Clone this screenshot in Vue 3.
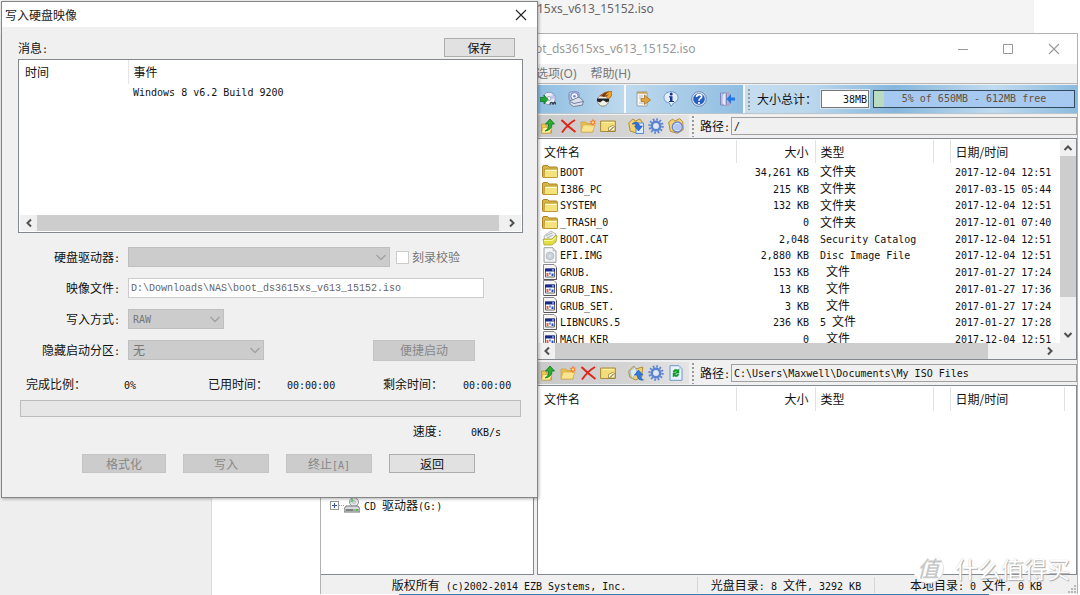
<script setup>
import { h } from 'vue'

/* Latin runs use a half-width monospace face next to full-width Chinese. */
const Mix = ({ t }) =>
  h('span', { class: 'mix' }, t.split(/([\u2e80-\uffef]+)/).filter(Boolean).map(part =>
    /[\u2e80-\uffef]/.test(part) ? h('span', part) : h('span', { class: 'mono' }, part)))
Mix.props = ['t']

const folder = '<path d="M.5 4q0-1.500 1.500-1.500h3.500l1.500 1.500h7q1.500 0 1.500 1.500V13.500q0 1-1 1H1.500q-1 0-1-1z" fill="#d9b64a" stroke="#a98222"/><path d="M2.500 6H15.500v7.500q0 1-1 1H3q-.8 0-.8-1z" fill="#f4e27c" stroke="#b8922d" stroke-width=".8"/><path d="M3.500 7.500h11" stroke="#fffbd0"/>'
const smallFolder = '<path d="M1 4h5l1 1.500h6V14H1z" fill="#e9c04d" stroke="#c99a2c" stroke-width=".6"/><path d="M3 7h12L12.500 14H1z" fill="#fbe48f" stroke="#cfa33b" stroke-width=".6"/>'
const art = {
  folder,
  catalog: '<path d="M2 6l7-5 5 3-3 6-8 1z" fill="#eef0ee" stroke="#9ba09a" stroke-width=".7"/><path d="M4 6l6-3M5 8l6-3" stroke="#a9b0b0" fill="none"/><path d="M1 9h9l4-4 1 1-1 6-4 3H2z" fill="#e2df45" stroke="#9b982b" stroke-width=".7"/><path d="M2 10.500h8l4-3" stroke="#fff9a0" fill="none"/>',
  image: '<path d="M2 .7h9L14 4v11.300H2z" fill="#f6f7f8" stroke="#9a9ea2"/><path d="M11 1v3h3" fill="#ddd" stroke="#aaa" stroke-width=".6"/><circle cx="8" cy="9" r="4" fill="#c7d2da" stroke="#aab3ba" stroke-width=".6"/><circle cx="8" cy="9" r="1" fill="#e5ebef"/>',
  file: '<path d="M1.500 .5h10.500l2.500 2.500V15.500h-13z" fill="#f4f4f4" stroke="#8a8a8a"/><path d="M14.500 4v11.500H2" fill="none" stroke="#555"/><path d="M3.500 5h9v8h-9z" fill="#fff" stroke="#666"/><path d="M3 4.500h10v3H3z" fill="#182a8b"/><path d="M10 5.500h2v1h-2z" fill="#dfe5ff"/><path d="M4.500 9h2v3h-2z" fill="#e0604a"/><path d="M7 8.500h2v2H7z" fill="#5c90e8"/><path d="M9.500 9.500h2v2.500h-2z" fill="#2a4fbf"/>',
  mount: '<circle cx="9" cy="7.500" r="6.300" fill="#e8edf7" stroke="#8b98b8"/><path d="M9 7.500L13 3a6 6 0 0 1 1.700 5z" fill="#c9c3f1"/><circle cx="9" cy="7.500" r="2" fill="#fff" stroke="#9aa6bd"/><path d="M4 4v2.500H0v4h4V13l4-4.500z" fill="#22a339" stroke="#0c6f20" stroke-width=".7"/><path d="M10 13.500q0-2 1.500-2t1 2M13.500 13.500q0-2 1-2t1.500 2" fill="none" stroke="#343a46" stroke-width="1.300"/>',
  burner: '<rect x="1" y=".8" width="10" height="9" rx="2" fill="#b9c5f1" stroke="#7b88b8"/><circle cx="6.500" cy="5.300" r="3.700" fill="#f2f4ff" stroke="#7182bd"/><circle cx="6.500" cy="5.300" r="1.300" fill="#718fd2"/><path d="M2 10l9-4 4.500 4-1 4-9 1.500L2 13z" fill="#dce2ed" stroke="#606c85" stroke-width=".8"/><path d="M3 11l3 1.500 9-2" fill="none" stroke="#7380a8"/>',
  burn: '<circle cx="7" cy="9.500" r="5.700" fill="#f0f1e6" stroke="#8a8b83"/><path d="M1 7.500h12v2.500l-2.500 1.500L8 9.500H6.500L4 11.500 1 10z" fill="#202024"/><path d="M4 5Q7 1 15.500 0q-1 2 .5 3-1 4-4 5L10 5z" fill="#f3a325" stroke="#98511c" stroke-width=".7"/><path d="M5 5q3-4 8-4-3 1-4 4l4-2q-2 3-5 3z" fill="#74391a"/>',
  exportDoc: '<path d="M2 1h10v14H2z" fill="#f8f6ed" stroke="#8995a5" stroke-width=".8"/><path d="M2 .7h10v2H2z" fill="#c5a25d"/><path d="M4 5h4M4 7h3M4 12h5" stroke="#b1bed0"/><path d="M6 7.500h3.500V4l6 5-6 4.500V10.500H6z" fill="#e4a23a" stroke="#a26a1c" stroke-width=".7"/>',
  info: '<path d="M8 .7c4 0 7 2.500 7 6 0 3-2 4.500-4.500 5.300L8 15.500 6.500 12C3 11.500 1 9.500 1 6.700c0-3.500 3-6 7-6z" fill="#e4eefb" stroke="#7497c5"/><circle cx="8.200" cy="3" r="1.500" fill="#173a91"/><path d="M6 5.300h3.500V10H11v1H6v-1h1V6.500H6z" fill="#173a91"/>',
  help: '<circle cx="8" cy="8" r="7.300" fill="#dfe9f8" stroke="#7388b3"/><circle cx="8" cy="8" r="5.800" fill="#275fc3"/><path d="M5.500 6q.3-2.400 2.700-2.400 2.500 0 2.500 2 0 1.200-1.500 2Q8 8.400 8 9.700" fill="none" stroke="#fff" stroke-width="1.700"/><circle cx="8" cy="12" r="1.100" fill="#fff"/>',
  exit: '<path d="M1.500 2h6v12h-6z" fill="#cbd0ef" stroke="#7986bf"/><path d="M3 4l4-3v14l-4-2z" fill="#e4e6f8" stroke="#8993bd" stroke-width=".7"/><path d="M8 2h2v3M10 11v3H8" fill="none" stroke="#d88d91"/><path d="M16 6.500h-4V3L7.500 8l4.500 5V9.500h4z" fill="#2676e8"/>',
  up: '<path d="M1.500 6h4l1 2h5v7h-10z" fill="#efc653" stroke="#b88a24" stroke-width=".7"/><path d="M3 9.500h9l-2 5.500H1.500z" fill="#fff09b" stroke="#c79d37" stroke-width=".6"/><path d="M5 13q4-2 3.500-7H5.500l4.500-5 4.500 5h-2.500q0 6-7 7z" fill="#2cad35" stroke="#10761b" stroke-width=".8"/>',
  del: '<path d="M1.500 2q6 6 14 12M15 2Q8 6 2 14.500" fill="none" stroke="#df2418" stroke-width="1.900"/>',
  newFolder: smallFolder + '<path d="M13 .5l1 2.200 2-.2-1.200 2L16 6l-2.200.2L13 8.500l-1-2-2 .2L11 4.500 9.700 3l2.300-.2z" fill="#f37936"/><circle cx="13" cy="4.500" r="1.200" fill="#ffda73"/>',
  rename: '<path d="M.6 3h14.800v10.500H.6z" fill="#f4dc79" stroke="#a68c3c"/><path d="M8.500 13V9.500l4-2 2.500 1V13z" fill="#fff6c5" stroke="#927a37" stroke-width=".7"/><path d="M10 12.500l3.500-3.500" stroke="#5c4d26"/><path d="M2 4.500h12" stroke="#fff2a6"/>',
  extract: '<path d="M.7 5l4-4 3 2 4-2 2.500 3v8l-6 3-6-2z" fill="#f3d36d" stroke="#b18a37"/><path d="M8 5h7.500v10.500H8z" fill="#dcebfd" stroke="#5490d4"/><path d="M4 6q5-5 8 2h2.500l-4 5-4-5h2q-1-3-4.500-2z" fill="#2d6fdb" stroke="#1e4da5" stroke-width=".5"/>',
  add: '<path d="M.7 6l5-5 2 3 7-2-1 10-6 3-6-3z" fill="#f3d36d" stroke="#b18a37"/><path d="M2 6l5-4 2 5-5 7z" fill="#d9e9fc" stroke="#79a2ce" stroke-width=".6"/><path d="M6.500 10l4-5 4.500 5h-2.500q0 4 3 5-6 1-6.500-5z" fill="#2d7ae0" stroke="#2055a4" stroke-width=".6"/>',
  gear: '<g fill="none" stroke="#5a84d2"><circle cx="8" cy="8" r="6.600" stroke-width="2.200" stroke-dasharray="1.700 1.756"/><circle cx="8" cy="8" r="4.200" stroke-width="2.600"/></g><circle cx="8" cy="8" r="2.600" fill="#dfe6f4"/>',
  disc: '<path d="M.7 4l4-3 2 2 5-2.300 3 3 .6 8-6 3.600-7-2z" fill="#f3d36d" stroke="#b98d32"/><circle cx="9.300" cy="9" r="5" fill="#dbe4fb" stroke="#6785d5" stroke-width="1.300"/><path d="M6.500 7h6M5.500 9h8M6.500 11h6" stroke="#8fa7e5"/>',
  refresh: '<path d="M2 .7h9l3 3v11.600H2z" fill="#e9f2ff" stroke="#7196ca"/><path d="M11 1v3h3" fill="#b9d3f2"/><path d="M5 7q1-4 5-2l1-1v4H7.500L9 6.500Q7 5.500 6.500 7.500zM11 9q-1 4-5 2l-1 1V8h3.500L7 9.700q2 1 2.500-.9z" fill="#159b2b" stroke="#159b2b" stroke-width=".5"/>',
  drive: '<circle cx="10" cy="5" r="4.500" fill="#e3e7ea" stroke="#929aa0"/><circle cx="10" cy="5" r="1.300" fill="#fff" stroke="#888" stroke-width=".6"/><path d="M8 1l2 3-4 2z" fill="#72cf75"/><path d="M2 9h12l2 3v3H0v-3z" fill="#d8dadd" stroke="#777"/><path d="M1 12h14v3H1z" fill="#a7abae"/><path d="M2 13h7" stroke="#555"/><path d="M12 12h2v2h-2z" fill="#38d528"/>',
  chevron: '<path d="M3.500 6L8 10.500 12.500 6" fill="none" stroke="#a0a0a0" stroke-width="1.300"/>',
  left: '<path d="M10 4.500L6.500 8l3.500 3.500" fill="none" stroke="#505050" stroke-width="2"/>',
  right: '<path d="M6 4.500L9.500 8 6 11.500" fill="none" stroke="#505050" stroke-width="2"/>',
  top: '<path d="M4.500 10L8 6.500l3.500 3.500" fill="none" stroke="#505050" stroke-width="2"/>',
  down: '<path d="M4.500 6L8 9.500 11.500 6" fill="none" stroke="#505050" stroke-width="2"/>',
  close: '<path d="M3 3l10 10M13 3L3 13" fill="none" stroke="currentColor" stroke-width="1.100"/>',
  min: '<path d="M3 8.500h10" fill="none" stroke="currentColor"/>',
  max: '<path d="M3.500 3.500h9v9h-9z" fill="none" stroke="currentColor"/>',
}
const Icon = ({ name }) => h('svg', { viewBox: '0 0 16 16', class: 'icon', 'aria-hidden': 'true', innerHTML: art[name] })
Icon.props = ['name']

const mainTools = [
  [['mount', '加载'], ['burner', '光驱'], ['burn', '刻录']],
  [['exportDoc', '导出'], ['info', '信息'], ['help', '帮助'], ['exit', '退出']],
]
const isoTools = [
  [['up', '上级'], ['del', '删除'], ['newFolder', '新建'], ['rename', '重命名']],
  [['extract', '提取'], ['gear', '选项'], ['disc', '光盘']],
]
const localTools = [
  [['up', '上级'], ['newFolder', '新建'], ['del', '删除'], ['rename', '重命名']],
  [['add', '添加'], ['gear', '选项'], ['refresh', '刷新']],
]
const files = [
  ['folder', 'BOOT', '34,261 KB', '文件夹', '2017-12-04 12:51'],
  ['folder', 'I386_PC', '215 KB', '文件夹', '2017-03-15 05:44'],
  ['folder', 'SYSTEM', '132 KB', '文件夹', '2017-12-04 12:51'],
  ['folder', '_TRASH_0', '0', '文件夹', '2017-12-01 07:40'],
  ['catalog', 'BOOT.CAT', '2,048', 'Security Catalog', '2017-12-04 12:51'],
  ['image', 'EFI.IMG', '2,880 KB', 'Disc Image File', '2017-12-04 12:51'],
  ['file', 'GRUB.', '153 KB', ' 文件', '2017-01-27 17:24'],
  ['file', 'GRUB_INS.', '13 KB', ' 文件', '2017-01-27 17:36'],
  ['file', 'GRUB_SET.', '3 KB', ' 文件', '2017-01-27 17:24'],
  ['file', 'LIBNCURS.5', '236 KB', '5 文件', '2017-01-27 17:28'],
  ['file', 'MACH_KER', '0', ' 文件', '2017-12-04 12:51'],
]
</script>

<template>
  <main class="desktop">
    <div class="back-top">15xs_v613_15152.iso</div>
    <div class="back-left"></div>
    <div class="taskline"></div>

    <section class="iso">
      <header class="iso-title">
        <span class="iso-name">ot_ds3615xs_v613_15152.iso</span>
        <button aria-label="最小化"><Icon name="min" /></button>
        <button aria-label="最大化"><Icon name="max" /></button>
        <button aria-label="关闭"><Icon name="close" /></button>
      </header>
      <nav class="menu"><button>选项(O)</button><button>帮助(H)</button></nav>
      <div class="maintools">
        <div v-for="(group, g) in mainTools" :key="g" class="maingroup" :class="'g' + g">
          <button v-for="b in group" :key="b[0]" :aria-label="b[1]"><Icon :name="b[0]" /></button>
        </div>
        <div class="capacity">
          <i class="grip"></i>
          <label for="total">大小总计：</label>
          <input id="total" class="total" value="38MB" readonly>
          <div class="meter"><span class="used" :style="{ width: '5%' }"></span><span class="meter-text">5% of 650MB - 612MB free</span></div>
        </div>
      </div>

      <div class="panes">
        <div class="tree">
          <div class="node"><span class="plus"></span><i class="dots"></i><Icon name="drive" /><Mix t="CD 驱动器(G:)" /></div>
        </div>
        <div class="right">
          <div class="pathbar">
            <div class="tools">
              <div v-for="(group, g) in isoTools" :key="g" class="toolgroup">
                <button v-for="b in group" :key="b[0]" :aria-label="b[1]"><Icon :name="b[0]" /></button>
              </div>
            </div>
            <i class="grip"></i>
            <label for="isopath"><Mix t="路径:" /></label>
            <input id="isopath" value="/" readonly>
          </div>
          <div class="list upper">
            <div class="view">
              <div class="clip">
                <table class="files">
                  <colgroup><col class="c-name"><col class="c-size"><col class="c-type"><col class="c-gap"><col></colgroup>
                  <thead><tr><th>文件名</th><th class="num">大小</th><th>类型</th><th></th><th class="end">日期/时间</th></tr></thead>
                  <tbody>
                    <tr v-for="f in files" :key="f[1]">
                      <td><span class="fname"><Icon :name="f[0]" /><Mix :t="f[1]" /></span></td>
                      <td class="num"><Mix :t="f[2]" /></td>
                      <td><Mix :t="f[3]" /></td>
                      <td></td>
                      <td><Mix :t="f[4]" /></td>
                    </tr>
                  </tbody>
                </table>
              </div>
              <div class="vbar"><Icon name="top" /><span class="vthumb"></span><Icon name="down" /></div>
            </div>
            <div class="hbar"><Icon name="left" /><span class="htrack"><span class="hthumb"></span></span><Icon name="right" /></div>
          </div>
          <div class="pathbar second">
            <div class="tools">
              <div v-for="(group, g) in localTools" :key="g" class="toolgroup">
                <button v-for="b in group" :key="b[0]" :aria-label="b[1]"><Icon :name="b[0]" /></button>
              </div>
            </div>
            <i class="grip"></i>
            <label for="localpath"><Mix t="路径:" /></label>
            <input id="localpath" value="C:\Users\Maxwell\Documents\My ISO Files" readonly>
          </div>
          <div class="list lower">
            <table class="files short">
              <colgroup><col class="c-name"><col class="c-size"><col class="c-type"><col class="c-gap"><col></colgroup>
              <thead><tr><th>文件名</th><th class="num">大小</th><th>类型</th><th></th><th>日期/时间</th></tr></thead>
            </table>
          </div>
        </div>
      </div>
      <footer class="status">
        <Mix t="版权所有 (c)2002-2014 EZB Systems, Inc." />
        <Mix t="光盘目录: 8 文件, 3292 KB" />
        <Mix t="本地目录: 0 文件, 0 KB" />
        <svg class="sizer" viewBox="0 0 9 9" aria-hidden="true"><path d="M7 1h2v2H7zM4 4h2v2H4zM7 4h2v2H7zM1 7h2v2H1zM4 7h2v2H4zM7 7h2v2H7z" fill="#b8b8b8" /></svg>
      </footer>
    </section>

    <section class="dialog" role="dialog" aria-labelledby="dlg-title">
      <header class="dlg-head"><h1 id="dlg-title">写入硬盘映像</h1><button aria-label="关闭"><Icon name="close" /></button></header>
      <div class="dlg-body">
        <div class="msg-head"><Mix t="消息:" /><button class="btn save">保存</button></div>
        <div class="log">
          <table>
            <colgroup><col class="c-time"><col></colgroup>
            <thead><tr><th>时间</th><th>事件</th></tr></thead>
            <tbody><tr><td></td><td><Mix t="Windows 8 v6.2 Build 9200" /></td></tr></tbody>
          </table>
          <div class="hbar"><Icon name="left" /><span class="htrack"><span class="hthumb full"></span></span><Icon name="right" /></div>
        </div>
        <div class="form">
          <label for="drive"><Mix t="硬盘驱动器:" /></label>
          <div class="field">
            <div class="select wide"><select id="drive" disabled><option></option></select><Icon name="chevron" /></div>
            <label class="check"><input type="checkbox" disabled>刻录校验</label>
          </div>
          <label for="img"><Mix t="映像文件:" /></label>
          <div class="field"><input id="img" class="file" value="D:\Downloads\NAS\boot_ds3615xs_v613_15152.iso" disabled></div>
          <label for="mode"><Mix t="写入方式:" /></label>
          <div class="field"><div class="select narrow"><select id="mode" class="latin" disabled><option>RAW</option></select><Icon name="chevron" /></div></div>
          <label for="hide"><Mix t="隐藏启动分区:" /></label>
          <div class="field">
            <div class="select mid"><select id="hide" disabled><option>无</option></select><Icon name="chevron" /></div>
            <button class="btn quick" disabled>便捷启动</button>
          </div>
        </div>
        <div class="stats">
          <span>完成比例：</span><Mix t="0%" />
          <span>已用时间：</span><Mix t="00:00:00" />
          <span>剩余时间：</span><Mix t="00:00:00" />
        </div>
        <div class="progress" role="progressbar" aria-valuenow="0"></div>
        <div class="speed"><Mix t="速度:" /><Mix t="0KB/s" /></div>
        <div class="actions">
          <button class="btn" disabled>格式化</button>
          <button class="btn" disabled>写入</button>
          <button class="btn" disabled><Mix t="终止[A]" /></button>
          <button class="btn">返回</button>
        </div>
      </div>
    </section>

    <div class="mark"><span class="disc">值</span><span class="brand">什么值得买</span></div>
  </main>
</template>

<style>
body { margin: 0; }
.mix { white-space: pre; }
.mono { font-family: "DejaVu Sans Mono", "Liberation Mono", monospace; font-size: 10px; line-height: 12px; }
.icon { display: block; width: 16px; height: 16px; flex: none; }
</style>

<style scoped>
* { box-sizing: border-box; }
.desktop { position: relative; min-height: 100vh; overflow: hidden; background: #fff; color: #111; font: 12px/16px "Noto Sans CJK SC", sans-serif; }
button { border: 0; background: none; padding: 0; margin: 0; font: inherit; color: inherit; }
input, select { font: inherit; margin: 0; border-radius: 0; }
.back-top { position: absolute; top: 0; left: 0; right: 46px; height: 34px; padding-left: 537px; background: #f4f4f4; color: #666; font: 12px/18px "Noto Sans", sans-serif; }
.back-left { position: absolute; top: 34px; bottom: 0; left: 0; width: 212px; background: #eee; border-right: 1px solid #ddd; }
.taskline { position: absolute; left: 399px; right: 91px; bottom: 0; height: 1px; background: #3d7ba9; }

.iso { position: absolute; top: 33px; left: 320px; right: 2px; bottom: 1px; display: flex; flex-direction: column; background: #f0f0f0; border: 1px solid #b2b2b2; border-bottom: 0; }
.iso-title { display: flex; align-items: center; height: 30px; padding: 0 9px 0 214px; background: #fff; color: #999; font: 12px/18px "Noto Sans", sans-serif; }
.iso-name { flex: 1; }
.iso-title button { width: 45px; display: flex; justify-content: center; color: #999; }
.iso-title button:last-child { width: 34px; padding-left: 6px; margin-left: 4px; }
.menu { display: flex; gap: 14px; height: 20px; padding-left: 215px; align-items: center; border-bottom: 1px solid #b5b5b5; color: #777; font: 12px/16px "Noto Sans", "Noto Sans CJK SC", sans-serif; }
.maintools { display: flex; gap: 2px; height: 29px; margin-top: 1px; background: #f8f8f8; border-bottom: 1px solid #b9c4cc; }
.maingroup { display: flex; align-items: center; gap: 12px; }
.g0 { padding: 0 12px 0 219px; background: linear-gradient(90deg, #8dbce0, #8dbce0 70%, #bdd9ee); }
.g1 { padding: 0 8px 0 9px; background: linear-gradient(90deg, #bfdaee, #8fbde1); }
.capacity { flex: 1; display: flex; align-items: center; padding: 0 2px 0 2px; background: linear-gradient(90deg, #c5ddef 0%, #bad7ed 20%, #85b6dc 45%, #c0dbef 75%, #8bbbdf 100%); }
.grip { width: 4px; height: 22px; flex: none; background: radial-gradient(circle, #9a9a9a 1px, transparent 1px) 0 0 / 4px 4px; }
.capacity label { margin: 0 4px 0 6px; }
.total { width: 48px; height: 18px; padding: 0 1px; text-align: right; border: 1px solid #777; outline: 1px solid #d8e4ed; background: #fff; font: 10px/16px "DejaVu Sans Mono", monospace; color: #111; }
.meter { flex: 1; position: relative; height: 18px; margin-left: 4px; border: 1px solid #34495c; background: #a6c9f1; text-align: center; }
.used { position: absolute; inset: 0 auto 0 0; background: #b9dcc0; }
.meter-text { position: relative; display: block; font: 10px/16px "DejaVu Sans Mono", monospace; color: #66503c; white-space: nowrap; }

.panes { flex: 1; min-height: 0; display: grid; grid-template-columns: 213px minmax(0, 1fr); gap: 3px; }
.tree { display: flex; flex-direction: column; justify-content: flex-end; padding: 0 0 61px 9px; background: #fff; border: 1px solid #828790; border-left: 0; }
.node { display: flex; align-items: center; }
.node .icon { margin-right: 4px; }
.plus { width: 9px; height: 9px; border: 1px solid #999; background: linear-gradient(#3553a0, #3553a0) center / 5px 1px no-repeat, linear-gradient(#3553a0, #3553a0) center / 1px 5px no-repeat, #fff; }
.dots { width: 5px; height: 1px; border-top: 1px dotted #999; }
.right { display: flex; flex-direction: column; min-width: 0; }
.pathbar { display: flex; align-items: center; height: 24px; flex: none; }
.pathbar.second { margin-top: 1px; }
.tools { display: flex; gap: 12px; width: 152px; height: 22px; align-items: center; padding-left: 3px; background: linear-gradient(90deg, #c9c9c9, #d4d4d4 60%, #e4e4e4); margin-right: 2px; }
.toolgroup { display: flex; gap: 4px; }
.pathbar label { margin: 0 3px 0 5px; width: 28px; white-space: nowrap; }
.pathbar input { flex: 1; min-width: 0; height: 18px; padding: 0 2px; border: 1px solid #a0a0a0; background: #f0f0f0; font: 10px/16px "DejaVu Sans Mono", monospace; color: #111; }
.list { background: #fff; border: 1px solid #828790; }
.upper { display: flex; flex-direction: column; height: 222px; flex: none; }
.view { flex: 1; min-height: 0; display: flex; padding-top: 1px; }
.clip { flex: 1; min-width: 0; overflow: hidden; }
.files { width: 100%; height: 207px; table-layout: fixed; border-collapse: collapse; }
.files.short { width: calc(100% - 11px); height: 24px; margin-top: 1px; }
.c-name { width: 198px; } .c-size { width: 79px; } .c-type { width: 118px; } .c-gap { width: 17px; }
.files th { height: 23px; padding: 0 6px; text-align: left; font-weight: 400; border-right: 1px solid #e2e2e2; }
.files th:nth-child(n+3) { padding-left: 5px; }
.files th.num, .files td.num { text-align: right; }
.files td.num { padding-right: 6px; }
.files th.end { border-right: 0; }
.files td { padding: 0 5px; line-height: 14px; white-space: nowrap; }
.files td:first-child { padding-left: 4px; }
.fname { display: flex; align-items: center; gap: 2px; height: 14px; }
.vbar { width: 16px; display: flex; flex-direction: column; background: #f0f0f0; }
.vthumb { height: 141px; background: #cdcdcd; margin-bottom: auto; }
.hbar { display: flex; align-items: center; height: 16px; flex: none; background: #f0f0f0; padding: 0 18px 0 1px; }
.htrack { flex: 1; height: 100%; }
.hthumb { display: block; width: 89%; height: 100%; background: #cdcdcd; }
.lower { flex: 1; }
.status { position: relative; display: grid; grid-template-columns: 377px 177px 1fr; align-items: center; height: 18px; margin-top: 1px; text-align: center; }
.status .mix { border-right: 1px solid #d6d6d6; }
.status .mix:nth-child(3) { border: 0; }
.sizer { position: absolute; right: 1px; bottom: 1px; width: 9px; height: 9px; }

.dialog { position: absolute; top: 1px; left: 1px; width: 537px; background: #f0f0f0; border: 1px solid #858585; box-shadow: 1px 1px 3px rgba(0, 0, 0, .3); }
.dlg-head { display: flex; justify-content: space-between; align-items: center; height: 25px; padding: 0 8px 0 3px; background: #fff; color: #222; }
.dlg-head h1 { margin: 0; font: inherit; }
.dlg-body { padding: 11px 14px 24px 16px; }
.msg-head { display: flex; justify-content: space-between; align-items: center; height: 19px; padding-right: 8px; }
.btn { height: 19px; border: 1px solid #adadad; background: #e1e1e1; line-height: 16px; }
.btn:disabled { border-color: #c4c4c4; background: #cccccc; color: #888; }
.save { width: 71px; }
.log { display: flex; flex-direction: column; justify-content: space-between; height: 174px; margin-top: 2px; padding: 0 1px 1px; border: 1px solid #828790; background: #fff; }
.log table { width: 100%; table-layout: fixed; border-collapse: collapse; }
.c-time { width: 108px; }
.log th { height: 24px; padding: 0 5px; font-weight: 400; text-align: left; }
.log th:first-child { border-right: 1px solid #e5e5e5; }
.log td { padding: 0 5px; line-height: 14px; }
.log .hbar { padding: 0 1px; }
.hthumb.full { width: 99%; }
.form { display: grid; grid-template-columns: 102px 1fr; column-gap: 8px; row-gap: 11px; margin-top: 14px; align-items: center; }
.form > label { text-align: right; white-space: nowrap; }
.field { display: flex; align-items: center; height: 20px; }
.select { position: relative; height: 20px; }
.select .icon { position: absolute; right: 1px; top: 2px; pointer-events: none; }
.select select { appearance: none; width: 100%; height: 100%; padding: 0 4px; border: 1px solid #bfbfbf; background: #cccccc; color: #777; opacity: 1; }
.select .latin { font: 10px "DejaVu Sans Mono", monospace; }
.wide { width: 262px; } .narrow { width: 96px; } .mid { width: 136px; }
.check { display: flex; align-items: center; gap: 3px; margin-left: 6px; color: #777; }
.check input { appearance: none; width: 13px; height: 13px; background: #fff; border: 1px solid #ccc; }
.file { width: 356px; height: 20px; padding: 0 2px; border: 1px solid #ccc; background: #fff; color: #666; font: 10px/18px "Liberation Mono", monospace; }
.quick { width: 102px; height: 21px; margin-left: 109px; }
.stats { display: grid; grid-template-columns: 98px 84px 79px 96px 80px auto; margin: 16px 0 0 8px; height: 16px; white-space: nowrap; }
.progress { height: 17px; margin: 8px 2px 0 2px; border: 1px solid #bcbcbc; background: #e6e6e6; }
.speed { display: flex; justify-content: flex-end; gap: 28px; margin: 6px 22px 0 0; height: 16px; }
.actions { display: grid; grid-template-columns: 84px 86px 86px 86px; column-gap: 17px; margin: 15px 0 0 64px; }

.mark { position: absolute; right: 10px; bottom: 12px; display: flex; align-items: center; gap: 12px; pointer-events: none; }
.disc { width: 30px; height: 30px; border-radius: 50%; background: #fff; color: #c8c8c8; font-size: 22px; line-height: 28px; font-weight: 500; font-style: italic; text-align: center; box-shadow: 1px 1px 1px #ddd; }
.brand { color: #fff; font-size: 23px; line-height: 30px; text-shadow: 1px 1px 1px #aaa, 0 0 1px #bbb; }
</style>
